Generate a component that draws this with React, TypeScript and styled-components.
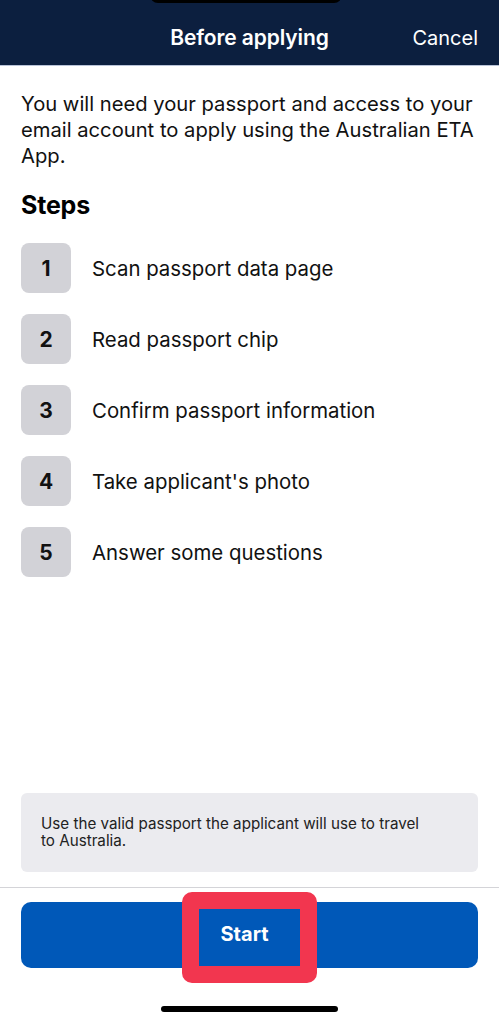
import React from 'react';
import styled, { createGlobalStyle } from 'styled-components';

const GlobalStyle = createGlobalStyle`
  html, body {
    margin: 0;
    padding: 0;
    background: #ffffff;
  }
  body {
    font-family: Inter, "Noto Sans", "Liberation Sans", sans-serif;
    -webkit-font-smoothing: antialiased;
  }
  * {
    box-sizing: border-box;
  }
`;

const Screen = styled.div`
  width: 499px;
  height: 1024px;
  display: flex;
  flex-direction: column;
  background: #ffffff;
  overflow: hidden;
`;

const Header = styled.header`
  position: relative;
  height: 66px;
  flex-shrink: 0;
  background: #0c1f3f;
  border-bottom: 1px solid #b9c3d8;
  display: grid;
  grid-template-columns: 1fr auto 1fr;
  align-items: center;
  padding: 10px 21px 0;
`;

const Island = styled.div`
  position: absolute;
  top: -8px;
  left: 150px;
  width: 192px;
  height: 11px;
  background: #000000;
  border-radius: 0 0 8px 8px;
`;

const Title = styled.h1`
  grid-column: 2;
  margin: 0;
  font-size: 21px;
  font-weight: 600;
  color: #ffffff;
  letter-spacing: -0.1px;
`;

const HeaderAction = styled.button`
  grid-column: 3;
  justify-self: end;
  background: none;
  border: none;
  padding: 0;
  font: inherit;
  font-size: 20px;
  color: #ffffff;
`;

const Content = styled.main`
  flex: 1;
  display: flex;
  flex-direction: column;
  padding: 25px 21px 0;
`;

const Intro = styled.p`
  margin: 0;
  font-size: 20.2px;
  line-height: 26px;
  color: #111111;
`;

const SectionTitle = styled.h2`
  margin: 21px 0 0;
  font-size: 25px;
  line-height: 30px;
  font-weight: 700;
  color: #000000;
  letter-spacing: -0.2px;
`;

const StepList = styled.ol`
  list-style: none;
  margin: 23px 0 0;
  padding: 0;
  display: flex;
  flex-direction: column;
  gap: 21px;
`;

const StepRow = styled.li`
  display: flex;
  align-items: center;
  gap: 21px;
`;

const StepNumber = styled.span`
  width: 50px;
  height: 50px;
  flex-shrink: 0;
  border-radius: 8px;
  background: #d2d2d7;
  display: flex;
  align-items: center;
  justify-content: center;
  font-size: 21px;
  font-weight: 700;
  color: #111111;
`;

const StepLabel = styled.span`
  font-size: 20.4px;
  color: #111111;
`;

const Notice = styled.div`
  margin-top: auto;
  margin-bottom: 15px;
  background: #ebebef;
  border-radius: 6px;
  padding: 22px 20px 23px;
  font-size: 15.2px;
  line-height: 17px;
  color: #222222;
`;

const Footer = styled.footer`
  flex-shrink: 0;
  border-top: 1px solid #d4d4d8;
  padding: 14px 21px 0;
  height: 137px;
  display: flex;
  flex-direction: column;
  align-items: center;
`;

const PrimaryButton = styled.button`
  position: relative;
  width: 100%;
  height: 66px;
  border: none;
  border-radius: 10px;
  background: #0058b8;
  color: #ffffff;
  font: inherit;
  font-size: 20px;
  font-weight: 700;
  display: flex;
  align-items: center;
  justify-content: center;
  padding: 0 10px 2px 0;
`;

const Highlight = styled.span`
  position: absolute;
  left: 161px;
  top: -10px;
  width: 135px;
  height: 91px;
  border: 17px solid #f2364f;
  border-radius: 10px;
`;

const HomeIndicator = styled.div`
  margin-top: auto;
  margin-bottom: 12px;
  width: 177px;
  height: 6px;
  border-radius: 3px;
  background: #000000;
`;

const steps = [
  'Scan passport data page',
  'Read passport chip',
  'Confirm passport information',
  "Take applicant's photo",
  'Answer some questions',
];

export default function App() {
  return (
    <>
      <GlobalStyle />
      <Screen>
        <Header>
          <Island />
          <Title>Before applying</Title>
          <HeaderAction>Cancel</HeaderAction>
        </Header>
        <Content>
          <Intro>
            You will need your passport and access to your email account to apply using the
            Australian ETA App.
          </Intro>
          <SectionTitle>Steps</SectionTitle>
          <StepList>
            {steps.map((label, i) => (
              <StepRow key={label}>
                <StepNumber>{i + 1}</StepNumber>
                <StepLabel>{label}</StepLabel>
              </StepRow>
            ))}
          </StepList>
          <Notice>
            Use the valid passport the applicant will use to travel
            <br />
            to Australia.
          </Notice>
        </Content>
        <Footer>
          <PrimaryButton>
            Start
            <Highlight />
          </PrimaryButton>
          <HomeIndicator />
        </Footer>
      </Screen>
    </>
  );
}
